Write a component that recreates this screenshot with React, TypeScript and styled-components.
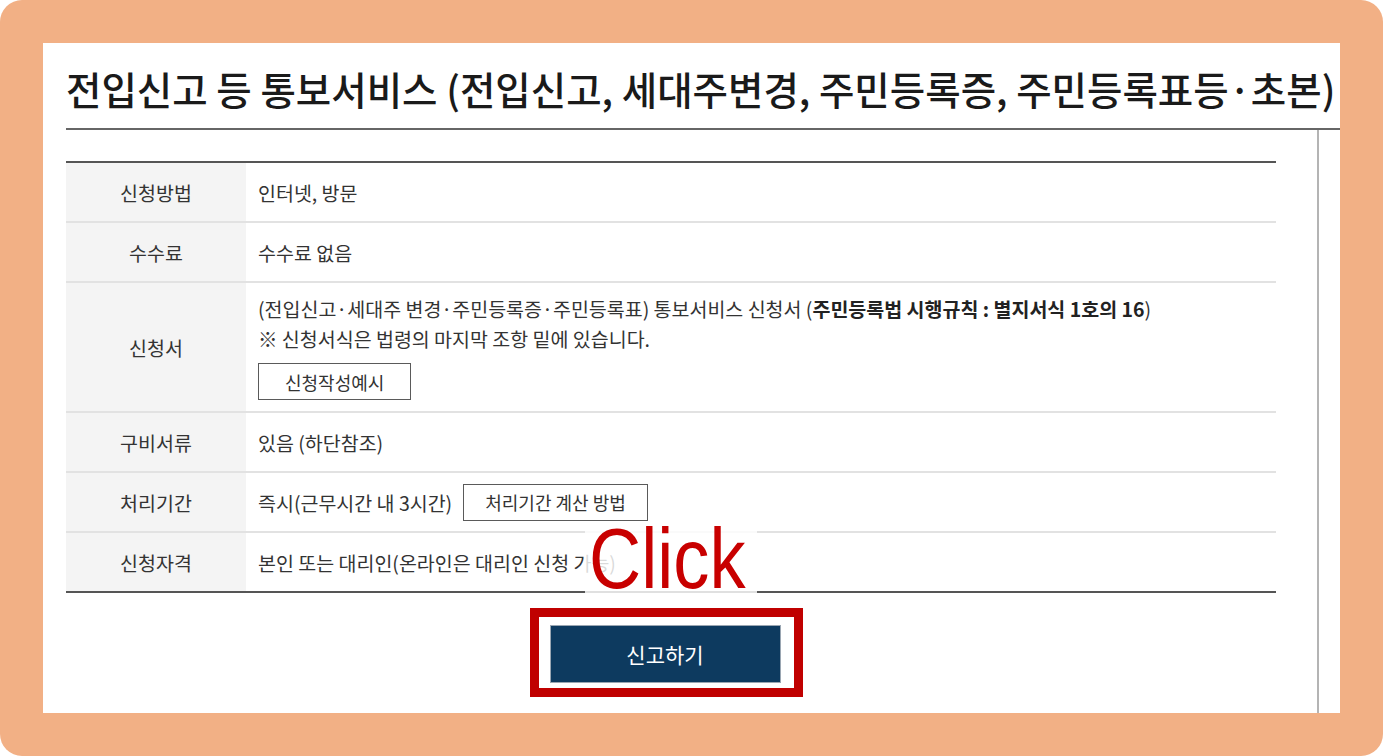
import React from "react";
import styled, { createGlobalStyle } from "styled-components";

const GlobalStyle = createGlobalStyle`
  html, body {
    margin: 0;
    padding: 0;
    background: #fff;
  }
  body {
    font-family: "Noto Sans CJK KR", "Noto Sans", sans-serif;
    color: #333;
  }
  * { box-sizing: border-box; }
`;

const rows = [
  { label: "신청방법", kind: "text", text: "인터넷, 방문" },
  { label: "수수료", kind: "text", text: "수수료 없음" },
  { label: "신청서", kind: "form" },
  { label: "구비서류", kind: "text", text: "있음 (하단참조)" },
  { label: "처리기간", kind: "period" },
  { label: "신청자격", kind: "text", text: "본인 또는 대리인(온라인은 대리인 신청 가능)" },
];

const App = () => {
  return (
    <>
      <GlobalStyle />
      <Frame>
        <Panel>
          <TitleBar>
            <Title>전입신고 등 통보서비스 (전입신고, 세대주변경, 주민등록증, 주민등록표등·초본)</Title>
          </TitleBar>
          <Body>
            <TableWrap>
              <InfoTable>
                {rows.map((row, index) => (
                  <Row key={row.label} first={index === 0} tall={row.kind === "form"}>
                    <HeadCell>{row.label}</HeadCell>
                    <DataCell>
                      {row.kind === "text" && <span>{row.text}</span>}
                      {row.kind === "form" && (
                        <FormBlock>
                          <Line>
                            (전입신고·세대주 변경·주민등록증·주민등록표) 통보서비스 신청서 (
                            <b>주민등록법 시행규칙 : 별지서식 1호의 16</b>)
                          </Line>
                          <Line>※ 신청서식은 법령의 마지막 조항 밑에 있습니다.</Line>
                          <LineButton wide={false}>신청작성예시</LineButton>
                        </FormBlock>
                      )}
                      {row.kind === "period" && (
                        <Inline>
                          <span>즉시(근무시간 내 3시간)</span>
                          <LineButton wide>처리기간 계산 방법</LineButton>
                        </Inline>
                      )}
                    </DataCell>
                  </Row>
                ))}
              </InfoTable>
              <ClickMark>
                <ClickText>Click</ClickText>
              </ClickMark>
            </TableWrap>
            <Actions>
              <Highlight>
                <SubmitButton>신고하기</SubmitButton>
              </Highlight>
            </Actions>
          </Body>
        </Panel>
      </Frame>
    </>
  );
};

const Frame = styled.div`
  width: 1383px;
  height: 756px;
  padding: 43px;
  background: #f2b085;
  border-radius: 22px;
`;
const Panel = styled.div`
  height: 100%;
  background: #fff;
  display: flex;
  flex-direction: column;
`;
const TitleBar = styled.div`
  margin-left: 23px;
  height: 87px;
  border-bottom: 2px solid #666;
  display: flex;
  align-items: center;
  padding-top: 4px;
`;
const Title = styled.h1`
  margin: 0;
  font-size: 38.5px;
  font-weight: 500;
  color: #1a1a1a;
  letter-spacing: 0;
  white-space: nowrap;
`;
const Body = styled.div`
  flex: 1;
  margin-right: 21px;
  border-right: 2px solid #b4b4b4;
  padding: 31px 41px 0 23px;
`;
const TableWrap = styled.div`
  position: relative;
`;
const InfoTable = styled.div`
  border-top: 2px solid #555;
  border-bottom: 2px solid #555;
`;
const Row = styled.div<{ first: boolean; tall: boolean }>`
  display: grid;
  grid-template-columns: 180px 1fr;
  height: ${(props) => (props.tall ? 130 : 60)}px;
  border-top: ${(props) => (props.first ? "none" : "2px solid #e2e2e2")};
  ${(props) => props.first && "height: 58px;"}
`;
const HeadCell = styled.div`
  background: #f4f4f4;
  display: flex;
  align-items: center;
  justify-content: center;
  font-size: 19.5px;
  color: #333;
`;
const DataCell = styled.div`
  display: flex;
  align-items: center;
  padding-left: 12px;
  font-size: 19.5px;
  color: #333;
  white-space: nowrap;
`;
const FormBlock = styled.div`
  display: flex;
  flex-direction: column;
  align-items: flex-start;
  b {
    font-weight: 700;
    color: #222;
  }
`;
const Line = styled.div`
  line-height: 30px;
`;
const Inline = styled.div`
  display: flex;
  align-items: center;
  gap: 11px;
`;
const LineButton = styled.button<{ wide: boolean }>`
  height: 37px;
  margin-top: ${(props) => (props.wide ? 0 : 9)}px;
  padding: 0 ${(props) => (props.wide ? 21 : 26)}px;
  border: 1px solid #5a5a5a;
  background: #fff;
  font-family: "Noto Sans CJK KR", sans-serif;
  font-size: 18px;
  color: #333;
`;
const ClickMark = styled.div`
  position: absolute;
  left: 519px;
  top: 364px;
  width: 172px;
  height: 72px;
  background: rgba(255, 255, 255, 0.82);
`;
const ClickText = styled.div`
  font-family: "Liberation Sans", Arial, sans-serif;
  font-size: 86px;
  line-height: 66px;
  color: #c80000;
  transform: scaleX(0.84);
  transform-origin: left center;
  margin-left: 4px;
  white-space: nowrap;
`;
const Actions = styled.div`
  display: flex;
  justify-content: center;
  padding-top: 15px;
  padding-right: 10px;
`;
const Highlight = styled.div`
  border: 9px solid #c00000;
  padding: 8px 13px 5px 11px;
`;
const SubmitButton = styled.button`
  width: 231px;
  height: 58px;
  background: #0d3a5f;
  border: 1px solid #9aa6b2;
  color: #fff;
  font-family: "Noto Sans CJK KR", sans-serif;
  font-size: 21px;
`;

export default App;
